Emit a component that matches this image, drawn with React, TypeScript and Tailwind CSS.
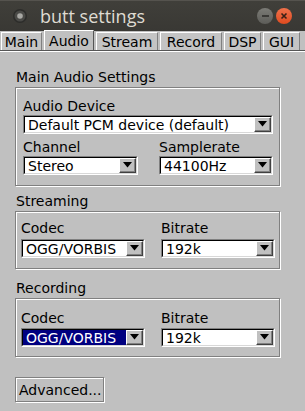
import React from "react";

const ui = "font-['DejaVu_Sans',sans-serif] text-[14px] leading-[16px] text-black";

function Arrow() {
  return (
    <div className="flex h-full w-[17px] shrink-0 items-center justify-center border border-t-white border-l-white border-b-[#404040] border-r-[#404040] bg-[#c0c0c0] shadow-[inset_-1px_-1px_0_#808080]">
      <svg width="9" height="6" viewBox="0 0 9 6" className="-mt-[1px]">
        <path d="M0 0 H9 L4.5 5.5 Z" fill="#000" />
      </svg>
    </div>
  );
}

function Choice({
  value,
  className,
  focused = false,
}: {
  value: string;
  className: string;
  focused?: boolean;
}) {
  return (
    <div
      className={`flex h-[19px] border border-t-[#808080] border-l-[#808080] border-b-white border-r-white ${className}`}
    >
      <div className="flex min-w-0 flex-1 border border-t-black border-l-black border-b-[#d8d8d8] border-r-[#d8d8d8] bg-white">
        <div
          className={`flex min-w-0 flex-1 items-center whitespace-nowrap pl-[3px] ${
            focused ? "bg-[#000080] text-white" : "bg-white"
          }`}
        >
          {value}
        </div>
        <Arrow />
      </div>
    </div>
  );
}

function Group({
  title,
  children,
  className,
}: {
  title: string;
  children: React.ReactNode;
  className: string;
}) {
  return (
    <div className="flex flex-col">
      <div className="pl-[1px]">{title}</div>
      <div
        className={`mt-[2px] border border-[#808080] shadow-[inset_1px_1px_0_#fff,1px_1px_0_#fff] ${className}`}
      >
        {children}
      </div>
    </div>
  );
}

const tabs = [
  { label: "Main", w: "w-[41px]" },
  { label: "Audio", w: "w-[50px]", active: true },
  { label: "Stream", w: "w-[62px]" },
  { label: "Record", w: "w-[62px]" },
  { label: "DSP", w: "w-[37px]" },
  { label: "GUI", w: "w-[37px]" },
];

export default function App() {
  return (
    <div className={`flex h-[411px] w-[305px] flex-col overflow-hidden bg-[#c0c0c0] ${ui}`}>
      {/* title bar */}
      <div className="flex h-[31px] shrink-0 items-center border-t border-[#55534e] bg-gradient-to-b from-[#403f3a] to-[#393834] px-[12px]">
        <svg width="16" height="16" viewBox="0 0 16 16" className="shrink-0">
          <circle cx="8" cy="8" r="7" fill="#2c2c2a" />
          <circle cx="8" cy="8" r="5.5" fill="#4a4a47" />
          <circle cx="8" cy="8" r="2.8" fill="#a8a8a4" />
        </svg>
        <span className="ml-[12px] font-['Open_Sans',sans-serif] text-[18px] leading-[20px] text-[#dfdbd2]">
          butt settings
        </span>
        <div className="ml-auto flex items-center gap-[3px] pr-[1px]">
          <div className="flex h-[16px] w-[16px] items-center justify-center rounded-full bg-gradient-to-b from-[#7b7b76] to-[#5d5d59]">
            <div className="h-[2px] w-[7px] bg-[#3a3936]" />
          </div>
          <div className="flex h-[16px] w-[16px] items-center justify-center rounded-full bg-gradient-to-b from-[#f0714a] to-[#df4a1d]">
            <svg width="8" height="8" viewBox="0 0 8 8">
              <path d="M1.5 1.5 L6.5 6.5 M6.5 1.5 L1.5 6.5" stroke="#3a2016" strokeWidth="1.6" />
            </svg>
          </div>
        </div>
      </div>

      {/* tabs */}
      <div className="flex h-[20px] shrink-0 items-end gap-[2px] border-b border-[#555] pl-[1px]">
        {tabs.map((t) =>
          t.active ? (
            <div
              key={t.label}
              className={`flex h-[20px] ${t.w} items-center justify-center border border-b-0 border-t-white border-l-white border-r-[#555] bg-[#c0c0c0]`}
            >
              {t.label}
            </div>
          ) : (
            <div
              key={t.label}
              className={`flex h-[18px] ${t.w} items-center justify-center border border-b-0 border-t-white border-l-white border-r-[#808080] bg-[#c4c4c4]`}
            >
              {t.label}
            </div>
          )
        )}
      </div>
      <div className="h-[1px] shrink-0 bg-white" />

      {/* panel */}
      <div className="flex flex-col px-[15px] pt-[17px]">
        <Group title="Main Audio Settings" className="h-[99px] w-[265px] px-[7px] pt-[10px]">
          <div>Audio Device</div>
          <Choice value="Default PCM device (default)" className="mt-[1px] w-[250px]" />
          <div className="mt-[5px] flex gap-[21px]">
            <div className="flex flex-col">
              <div>Channel</div>
              <Choice value="Stereo" className="mt-[1px] w-[115px]" />
            </div>
            <div className="flex flex-col">
              <div>Samplerate</div>
              <Choice value="44100Hz" className="mt-[1px] w-[114px]" />
            </div>
          </div>
        </Group>

        <div className="mt-[7px]">
          <Group title="Streaming" className="h-[58px] w-[265px] px-[5px] pt-[8px]">
            <div className="flex gap-[16px]">
              <div className="flex flex-col">
                <div>Codec</div>
                <Choice value="OGG/VORBIS" className="mt-[3px] w-[124px]" />
              </div>
              <div className="flex flex-col">
                <div>Bitrate</div>
                <Choice value="192k" className="mt-[3px] w-[114px]" />
              </div>
            </div>
          </Group>
        </div>

        <div className="mt-[11px]">
          <Group title="Recording" className="h-[59px] w-[265px] px-[5px] pt-[11px]">
            <div className="flex gap-[16px]">
              <div className="flex flex-col">
                <div>Codec</div>
                <Choice value="OGG/VORBIS" className="mt-[2px] w-[124px]" focused />
              </div>
              <div className="flex flex-col">
                <div>Bitrate</div>
                <Choice value="192k" className="mt-[2px] w-[114px]" />
              </div>
            </div>
          </Group>
        </div>

        <div className="mt-[20px] flex">
          <button className="flex h-[25px] w-[89px] items-center border border-[#808080] pl-[3px] shadow-[inset_1px_1px_0_#fff,1px_1px_0_#fff]">
            Advanced...
          </button>
        </div>
      </div>
    </div>
  );
}
